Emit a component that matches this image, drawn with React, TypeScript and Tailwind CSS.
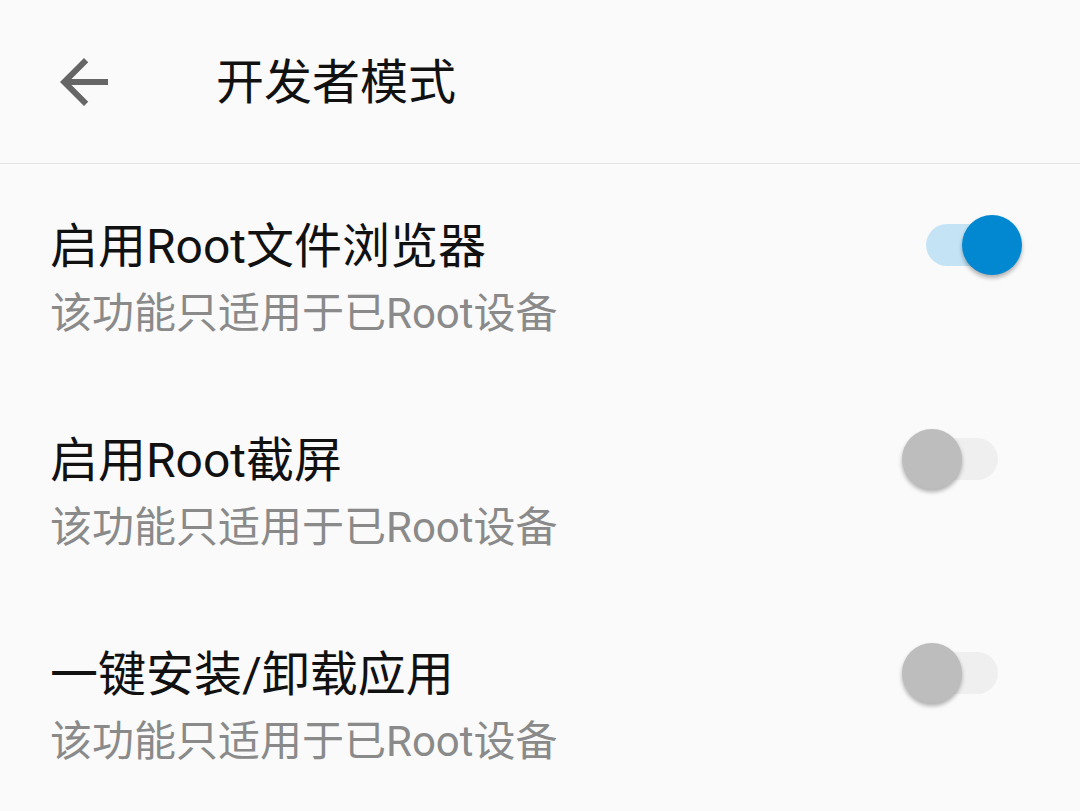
const items = [
  { title: "启用Root文件浏览器", desc: "该功能只适用于已Root设备", on: true },
  { title: "启用Root截屏", desc: "该功能只适用于已Root设备", on: false },
  { title: "一键安装/卸载应用", desc: "该功能只适用于已Root设备", on: false },
];

const Switch = ({ on }: { on: boolean }) => (
  <div className="relative flex h-[60px] w-[120px] items-center">
    <div
      className={
        on
          ? "mx-[24px] h-[42px] w-[72px] rounded-full bg-[#c4e4f6]"
          : "mx-[24px] h-[42px] w-[72px] rounded-full bg-[#efefef]"
      }
    />
    <div
      className={
        on
          ? "absolute right-0 top-0 h-[60px] w-[60px] rounded-full bg-[#0288d1] shadow-[0_3px_4px_rgba(0,0,0,0.3)]"
          : "absolute left-0 top-0 h-[60px] w-[60px] rounded-full bg-[#bdbdbd] shadow-[0_3px_4px_rgba(0,0,0,0.3)]"
      }
    />
  </div>
);

const App = () => (
  <div
    className="min-h-[811px] w-full bg-[#fafafa]"
    style={{ fontFamily: 'Roboto, "Noto Sans CJK SC", sans-serif' }}
  >
    <header className="flex h-[164px] items-center border-b border-[#e3e3e3]">
      <svg
        viewBox="0 0 24 24"
        className="ml-[48px] h-[72px] w-[72px] fill-[#666666]"
      >
        <path d="M20 11H7.83l5.59-5.59L12 4l-8 8 8 8 1.41-1.41L7.83 13H20v-2z" />
      </svg>
      <h1 className="mb-[-2px] ml-[96px] text-[48px] leading-[64px] text-[#111111]">
        开发者模式
      </h1>
    </header>
    <ul className="flex flex-col">
      {items.map((item) => (
        <li
          key={item.title}
          className="flex h-[214px] items-start justify-between pl-[50px] pr-[58px] pt-[51px]"
        >
          <div className="flex flex-col">
            <span className="text-[48px] leading-[64px] text-[#111111]">
              {item.title}
            </span>
            <span className="text-[42px] leading-[70px] text-[#8a8a8a]">
              {item.desc}
            </span>
          </div>
          <div className="mt-0">
            <Switch on={item.on} />
          </div>
        </li>
      ))}
    </ul>
  </div>
);

export default App;
